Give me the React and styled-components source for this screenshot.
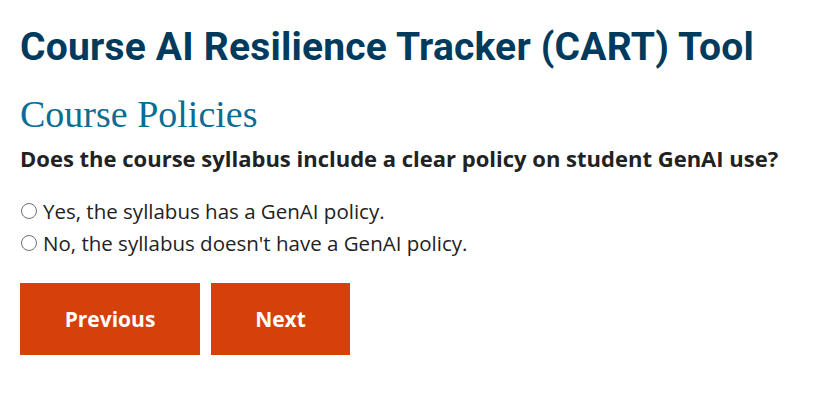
import styled, { createGlobalStyle } from 'styled-components';

const GlobalStyle = createGlobalStyle`
  html, body {
    margin: 0;
    padding: 0;
    background: #fff;
  }
`;

const Page = styled.div`
  padding: 23px 20px;
  font-family: 'Open Sans', sans-serif;
  color: #222;
`;

const Title = styled.h1`
  margin: 0;
  font-family: 'Roboto', 'DejaVu Sans', sans-serif;
  font-weight: 700;
  font-size: 39px;
  line-height: 48px;
  letter-spacing: 0.2px;
  white-space: nowrap;
  color: #003a5d;
`;

const Section = styled.h2`
  margin: 21px 0 0;
  font-family: 'Liberation Serif', Georgia, serif;
  font-weight: 400;
  font-size: 38px;
  line-height: 44px;
  color: #0a6d94;
`;

const Question = styled.p`
  margin: 7px 0 0;
  font-weight: 700;
  font-size: 22px;
  line-height: 30px;
  white-space: nowrap;
`;

const Options = styled.div`
  margin-top: 22px;
  display: flex;
  flex-direction: column;
`;

const Option = styled.label`
  display: flex;
  align-items: center;
  font-size: 20.5px;
  line-height: 32px;
`;

const Radio = styled.span`
  width: 16px;
  height: 16px;
  border: 1px solid #707070;
  border-radius: 50%;
  margin: 0 6px 0 1px;
  box-sizing: border-box;
`;

const Buttons = styled.div`
  display: flex;
  gap: 11px;
  margin-top: 24px;
`;

const Button = styled.button`
  border: 0;
  background: #d6400b;
  color: #fff;
  font-family: 'Open Sans', sans-serif;
  font-weight: 700;
  font-size: 21px;
  height: 72px;
  width: ${(p) => p.w}px;
  padding: 0;
`;

export default function App() {
  return (
    <>
      <GlobalStyle />
      <Page>
        <Title>Course AI Resilience Tracker (CART) Tool</Title>
        <Section>Course Policies</Section>
        <Question>Does the course syllabus include a clear policy on student GenAI use?</Question>
        <Options>
          <Option>
            <Radio />
            Yes, the syllabus has a GenAI policy.
          </Option>
          <Option>
            <Radio />
            No, the syllabus doesn't have a GenAI policy.
          </Option>
        </Options>
        <Buttons>
          <Button w={180}>Previous</Button>
          <Button w={139}>Next</Button>
        </Buttons>
      </Page>
    </>
  );
}
